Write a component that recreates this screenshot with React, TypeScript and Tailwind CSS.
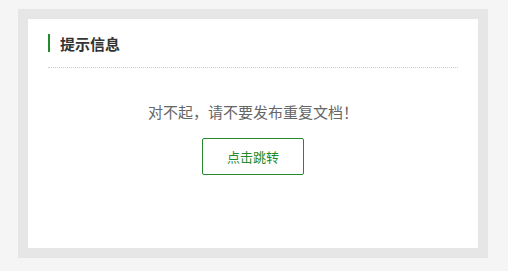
export default function App() {
  return (
    <div
      className="w-[508px] h-[271px] bg-[#f5f5f5] pt-[9px] pl-[18px]"
      style={{ fontFamily: '"Noto Sans CJK SC", "Liberation Sans", sans-serif' }}
    >
      <div className="w-[470px] h-[249px] bg-[#e6e6e6] p-[10px]">
        <div className="w-[450px] h-[229px] bg-white px-[20px] pt-[15px]">
          <div className="flex items-center h-[18px] border-l-2 border-[#238b2b] pl-[10px]">
            <span className="text-[15px] font-bold text-[#333] leading-none">提示信息</span>
          </div>
          <div className="mt-[15px] border-t border-dotted border-[#ccc]" />
          <div className="mt-[33px] text-center text-[15px] leading-[22px] text-[#666]">
            对不起，请不要发布重复文档！
          </div>
          <div className="mt-[15px] flex justify-center">
            <button className="w-[102px] h-[37px] border border-[#238b2b] rounded-[2px] text-[13px] text-[#238b2b] bg-white">
              点击跳转
            </button>
          </div>
        </div>
      </div>
    </div>
  );
}
